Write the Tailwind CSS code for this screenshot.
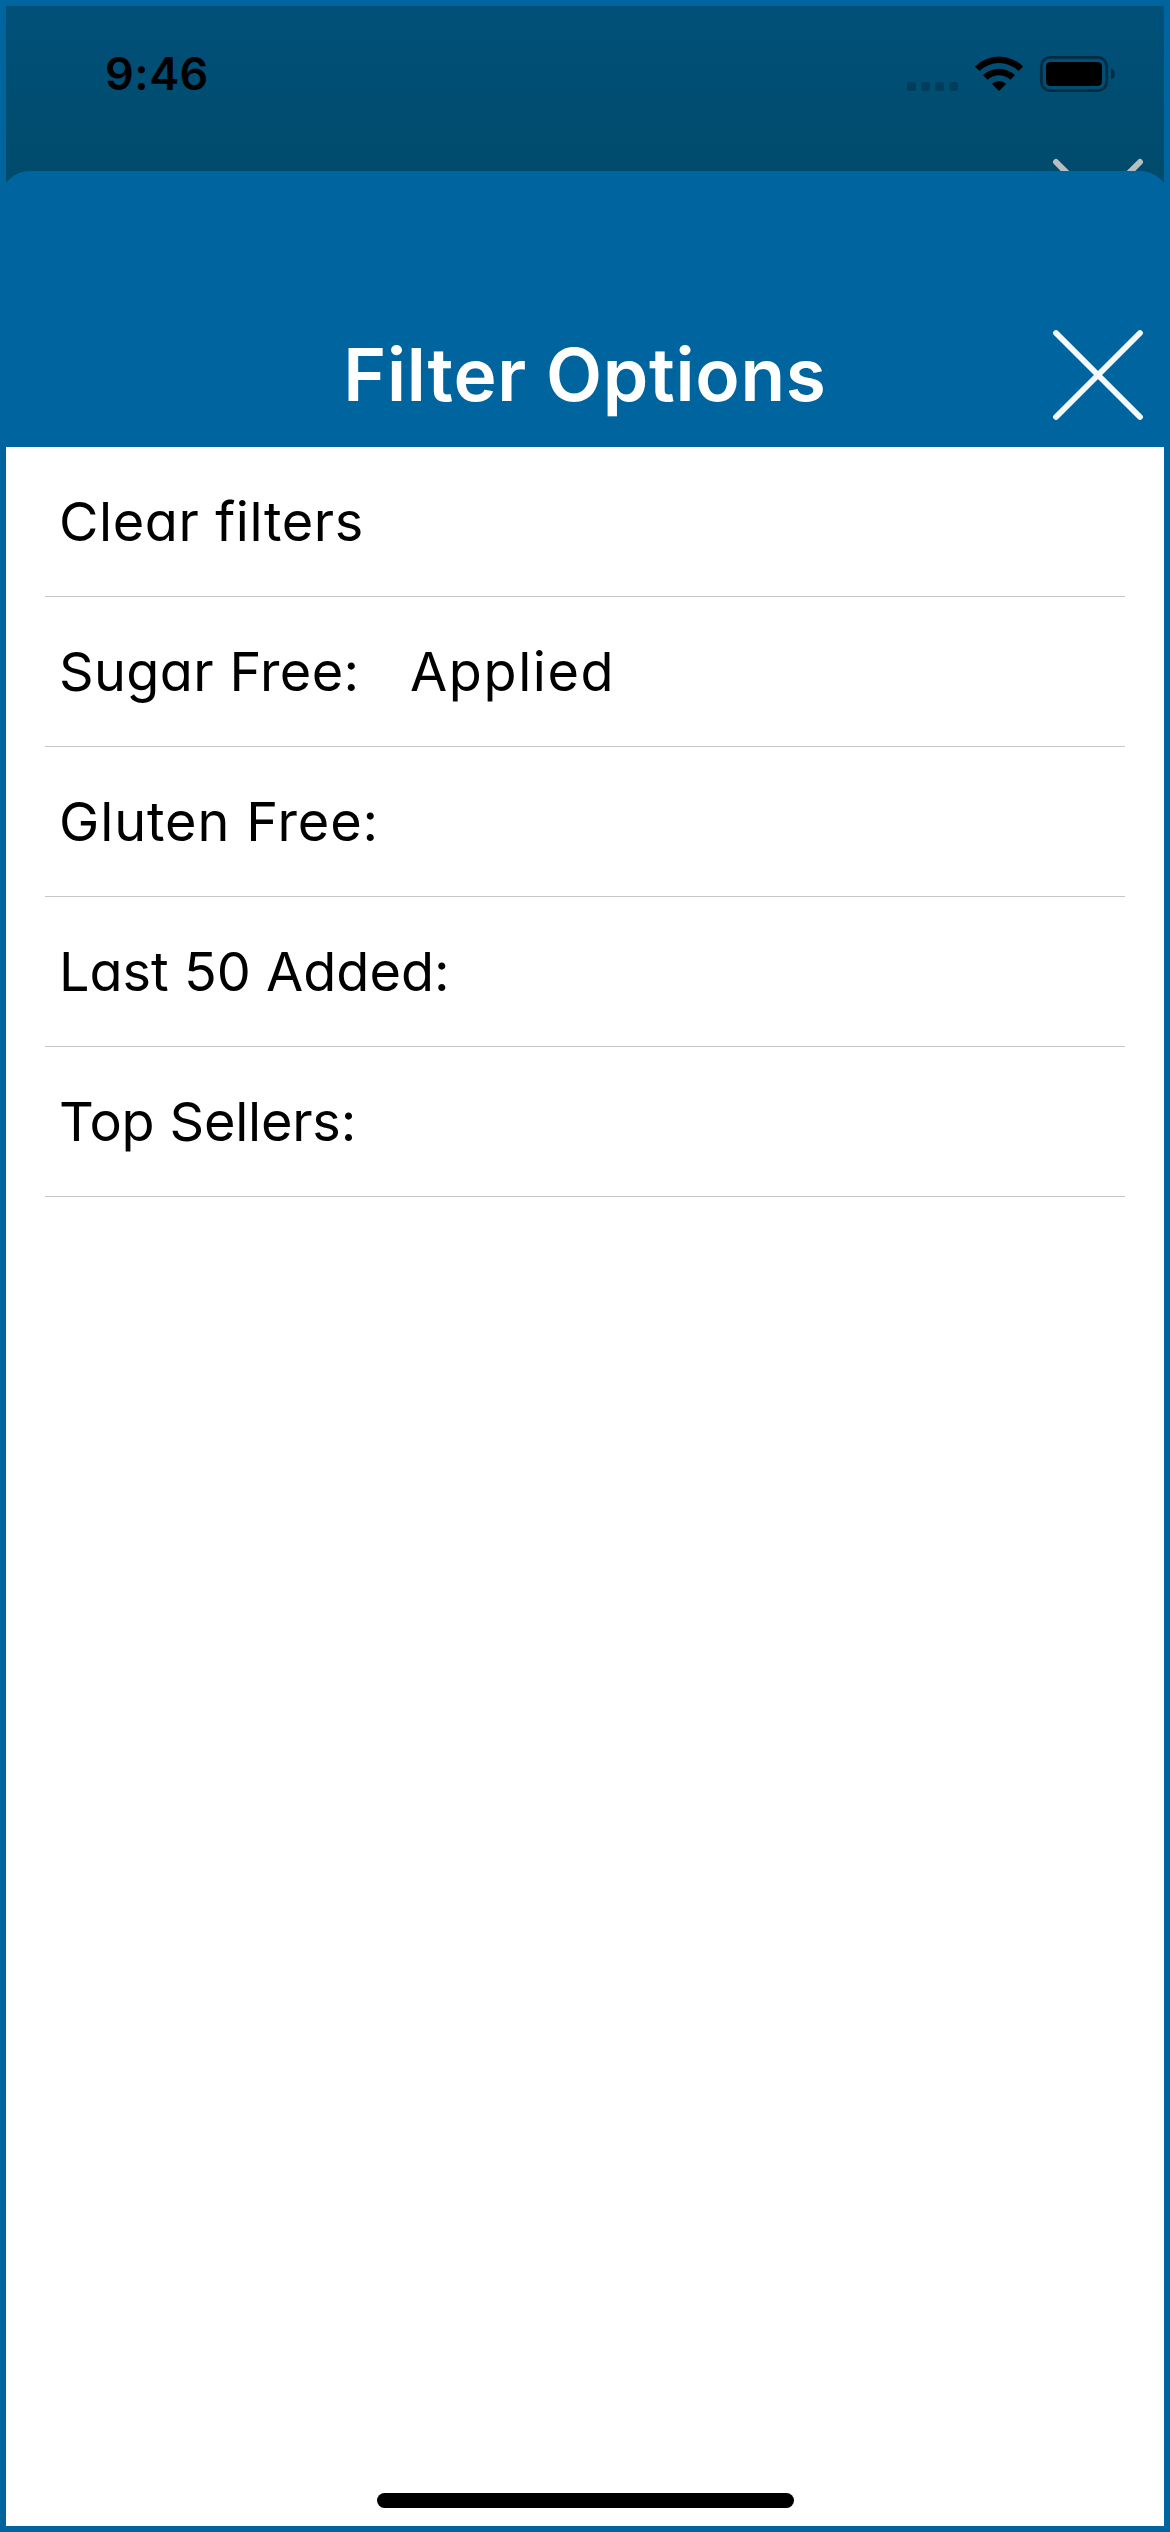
<!DOCTYPE html>
<html lang="en">
<head>
<meta charset="utf-8">
<title>Filter Options</title>
<script src="https://cdn.jsdelivr.net/npm/@tailwindcss/browser@4"></script>
</head>
<body class="bg-[#00659f] font-['Inter',sans-serif]">
<main class="flex h-[2532px] w-[1170px] flex-col overflow-hidden border-6 border-[#00659f] bg-white">
  <!-- Dimmed screen behind the sheet -->
  <div class="flex h-[180px] shrink-0 flex-col bg-linear-to-b from-[#005079] to-[#004b6b]">
    <header class="flex h-[149px] items-start justify-between pr-[48px] pl-[99px]">
      <time class="mt-[40px] text-[45px] leading-[56px] font-semibold tracking-[0.5px] text-black">9:46</time>
      <svg class="mt-[44px]" width="216" height="48" viewBox="900 50 216 48">
        <g fill="#000" fill-opacity=".2"><rect x="907" y="82" width="9" height="9" rx="2.5"/><rect x="921" y="82" width="9" height="9" rx="2.5"/><rect x="935" y="82" width="9" height="9" rx="2.5"/><rect x="949" y="82" width="9" height="9" rx="2.5"/></g>
        <path d="M999 91l-7.200-7.200a10.500 10.500 0 0 1 14.400 0z"/>
        <path d="M983 75.200a23 23 0 0 1 32 0l-4.600 4.600a16.500 16.500 0 0 0-22.800 0zM974.800 66.400a34.800 34.800 0 0 1 48.400 0l-4.700 4.600a28 28 0 0 0-39 0z"/>
        <rect x="1041.300" y="57.300" width="65.400" height="33.400" rx="9" fill="none" stroke="#000" stroke-opacity=".42" stroke-width="2.800"/>
        <rect x="1046" y="62" width="56" height="24" rx="4.500"/>
        <path d="M1111 68.500q4 1.500 4 5.500t-4 5.500z" fill-opacity=".42"/>
      </svg>
    </header>
    <svg class="mr-[13px] self-end" width="104" height="16" viewBox="1047 155 104 16" fill="none" stroke="#b9bfc0" stroke-width="6" stroke-linecap="round"><path d="M1056 162l84 84M1140 162l-84 84"/></svg>
  </div>
  <!-- Sheet header -->
  <section class="z-10 -mx-[6px] -mt-[15px] flex h-[276px] shrink-0 flex-col justify-end rounded-t-[30px] bg-[#00659f]">
    <div class="grid h-[146px] grid-cols-[120px_1fr_120px] items-center">
      <h1 class="col-start-2 pt-[1px] text-center text-[73px] leading-[80px] font-semibold tracking-[0.7px] whitespace-nowrap text-white">Filter Options</h1>
      <svg role="button" aria-label="Close" width="120" height="146" viewBox="1050 301 120 146" fill="none" stroke="#f6f9fb" stroke-width="5.800" stroke-linecap="round"><path d="M1056 333l84 84M1140 333l-84 84"/></svg>
    </div>
  </section>
  <ul class="mx-[39px] flex flex-col text-[54px] text-black [font-feature-settings:'cv11']">
    <li class="flex h-[150px] items-center border-b border-[#c6c6c6] pl-[14px] tracking-[0.6px]">Clear filters</li>
    <li class="flex h-[150px] items-center border-b border-[#c6c6c6] pl-[14px]"><span class="w-[351px] tracking-[0.35px]">Sugar Free:</span><span class="tracking-[1.6px]">Applied</span></li>
    <li class="flex h-[150px] items-center border-b border-[#c6c6c6] pl-[14px] tracking-[0.9px]">Gluten Free:</li>
    <li class="flex h-[150px] items-center border-b border-[#c6c6c6] pl-[14px]">Last 50 Added:</li>
    <li class="flex h-[150px] items-center border-b border-[#c6c6c6] pl-[14px] tracking-[-0.2px]">Top Sellers:</li>
  </ul>
  <!-- Home indicator -->
  <div class="mt-auto mb-[18px] h-[15px] w-[417px] shrink-0 self-center rounded-full bg-black"></div>
</main>
</body>
</html>
